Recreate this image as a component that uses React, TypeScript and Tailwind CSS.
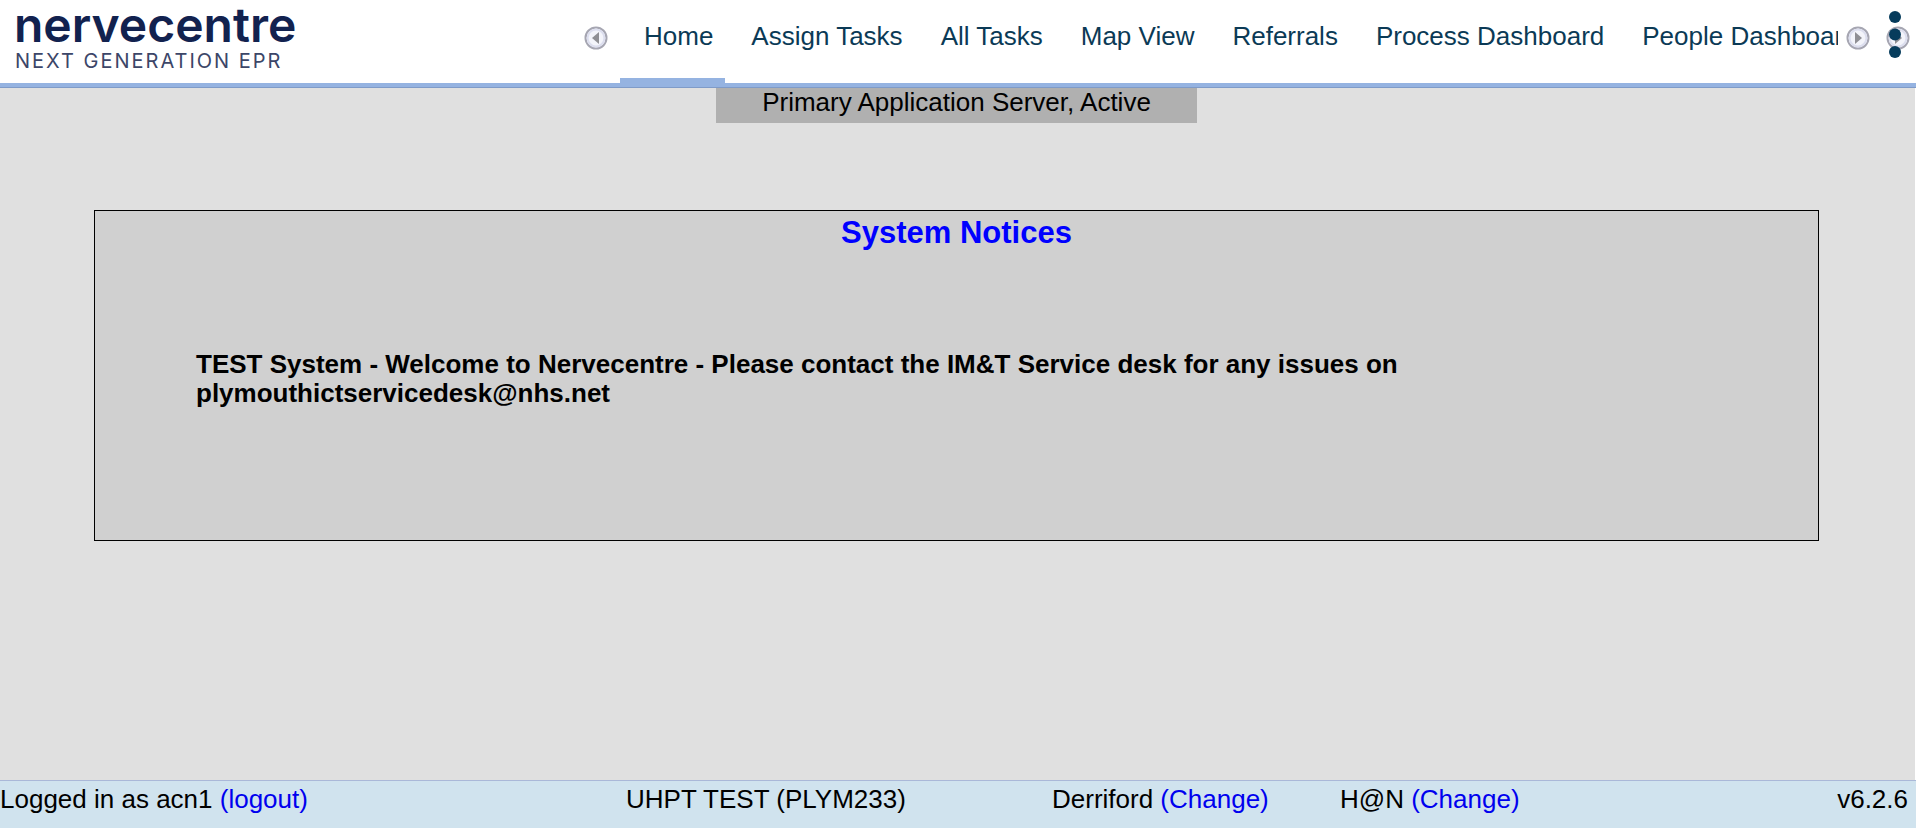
import React, { useState } from "react";

interface NavItem {
  label: string;
}

const navItems: NavItem[] = [
  { label: "Home" },
  { label: "Assign Tasks" },
  { label: "All Tasks" },
  { label: "Map View" },
  { label: "Referrals" },
  { label: "Process Dashboard" },
  { label: "People Dashboard" },
];

// Round scroll arrow used at both ends of the nav
const ScrollArrow: React.FC<{ direction: "left" | "right" }> = ({ direction }) => (
  <svg viewBox="0 0 24 24" className="block size-6" aria-hidden="true">
    <circle cx="12" cy="12" r="10.5" fill="#f3f4fa" stroke="#a6a6b2" strokeWidth="2" />
    <circle cx="12" cy="12" r="8.4" fill="none" stroke="#dcdeee" strokeWidth="2" />
    <path d={direction === "left" ? "M15 6v12L8 12z" : "M9 6v12l7-6z"} fill="#8f8f94" />
  </svg>
);

const Logo: React.FC = () => (
  <a href="#home" className="flex flex-col pt-px pl-3.5 text-[#12224f]">
    <span className="font-['Inter',sans-serif] text-[48px] leading-[48px] font-semibold">nervecentre</span>
    <span className="pl-px font-['Inter',sans-serif] text-[20px] leading-6 tracking-widest text-[#3c4668]">
      NEXT GENERATION EPR
    </span>
  </a>
);

const Header: React.FC = () => {
  const [active, setActive] = useState<string>("Home");

  return (
    <header className="flex h-[88px] justify-between border-b border-[#7f9bc8] bg-white">
      <div className="flex grow justify-between border-b-4 border-[#95b3e1]">
        <Logo />
        <div className="flex w-[1332px] shrink-0">
          <button type="button" aria-label="Scroll left" className="mt-[26px] size-6 shrink-0">
            <ScrollArrow direction="left" />
          </button>
          <nav className="ml-3 flex grow overflow-hidden">
            {navItems.map((item) => (
              <a
                key={item.label}
                href="#"
                onClick={() => setActive(item.label)}
                className={`mr-0.5 shrink-0 border-b-5 pt-[21px] pr-3 pl-6 leading-[30px] whitespace-nowrap text-[#0b3a56] ${
                  active === item.label ? "border-[#95b3e1]" : "border-transparent"
                }`}
              >
                {item.label}
              </a>
            ))}
          </nav>
          <button type="button" aria-label="Scroll right" className="mt-[26px] ml-2 size-6 shrink-0">
            <ScrollArrow direction="right" />
          </button>
          <button type="button" aria-label="Menu" className="relative mt-[26px] mr-[6px] ml-4 size-6 shrink-0">
            <ScrollArrow direction="right" />
            {/* Menu dots sit over the arrow */}
            <svg viewBox="0 0 16 48" className="absolute -top-[15px] left-0 h-12 w-4" aria-hidden="true">
              <circle cx="9" cy="6" r="6" fill="#063c5c" />
              <circle cx="9" cy="23.5" r="6" fill="#063c5c" />
              <circle cx="9" cy="41" r="6" fill="#063c5c" />
            </svg>
          </button>
        </div>
      </div>
    </header>
  );
};

const Footer: React.FC = () => (
  <footer className="flex h-12 border-t border-[#aab8d8] bg-[#d0e3ee] pt-[3px] leading-[30px] whitespace-nowrap">
    <div className="w-[626px]">
      Logged in as acn1 <a href="#logout" className="text-[#0000ee]">(logout)</a>
    </div>
    <div className="w-[426px]">UHPT TEST (PLYM233)</div>
    <div className="w-[288px]">
      Derriford <a href="#site" className="text-[#0000ee]">(Change)</a>
    </div>
    <div>
      H@N <a href="#team" className="text-[#0000ee]">(Change)</a>
    </div>
    <div className="ml-auto pr-2">v6.2.6</div>
  </footer>
);

const App: React.FC = () => {
  return (
    <div className="flex min-h-screen flex-col bg-[#e0e0e0] font-['Liberation_Sans',Arial,sans-serif] text-[26px] text-black">
      <Header />

      <main className="flex grow flex-col border-r border-white pr-0.5">
        <div className="mx-auto h-[35px] w-[481px] bg-[#b0b0b0] text-center leading-7">
          Primary Application Server, Active
        </div>

        {/* System notices panel */}
        <section className="mx-[94px] mt-[87px] min-h-[331px] border border-black bg-[#d0d0d0] px-[101px]">
          <h1 className="pt-1 text-center text-[31px] leading-9 font-bold text-[#0000ff]">System Notices</h1>
          <p className="mt-[99px] max-w-[1280px] leading-[29px] font-bold">
            TEST System - Welcome to Nervecentre - Please contact the IM&amp;T Service desk for any issues on
            plymouthictservicedesk@nhs.net
          </p>
        </section>
      </main>

      <Footer />
    </div>
  );
};

export default App;
